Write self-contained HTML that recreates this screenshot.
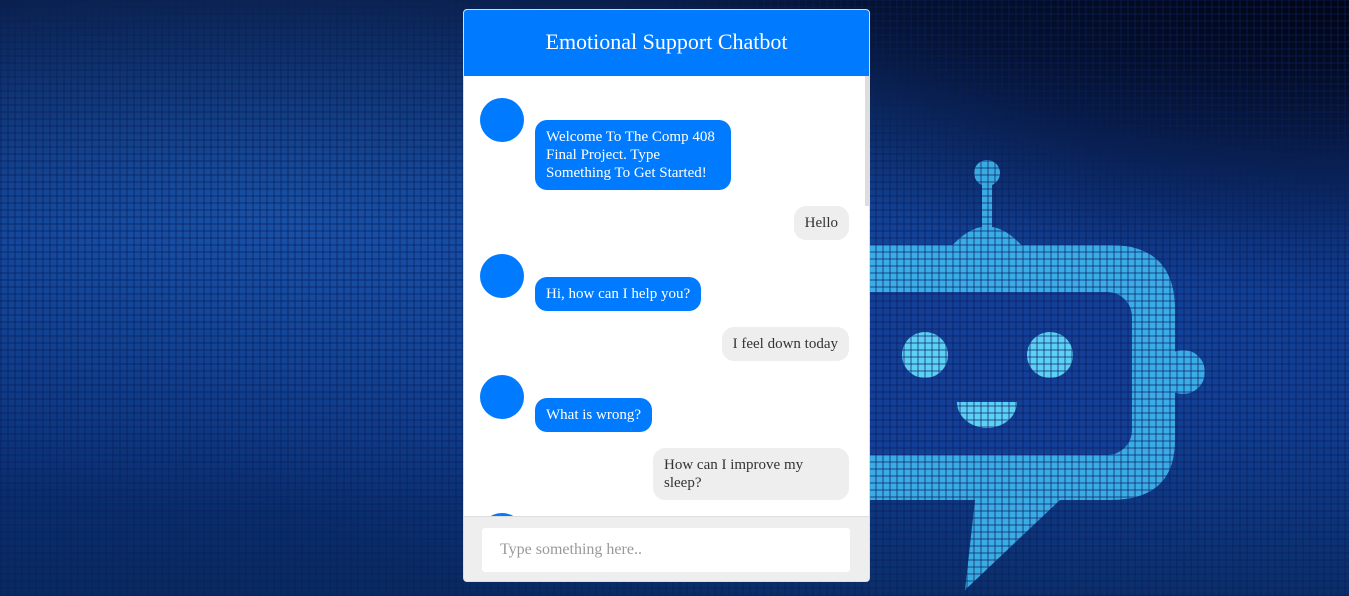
<!DOCTYPE html>
<html><head><style>
*{margin:0;padding:0;box-sizing:border-box}
body{width:1349px;height:596px;overflow:hidden;position:relative;font-family:"Liberation Serif",serif;
background:#0a2a6a;}
.bg{position:absolute;inset:0;background:
radial-gradient(ellipse at 100% 0%,rgba(0,0,10,.8),transparent 35%),
radial-gradient(ellipse at 20% 35%,rgba(40,120,220,.45),transparent 55%),
radial-gradient(ellipse at 80% 60%,rgba(30,90,200,.45),transparent 60%),
linear-gradient(180deg,#06163a 0%,#0b3380 40%,#0a3078 70%,#082a60 100%);}
.grid{position:absolute;inset:0;background:
repeating-linear-gradient(90deg,rgba(10,30,90,.35) 0 2px,transparent 2px 7px),
repeating-linear-gradient(0deg,rgba(10,30,90,.35) 0 2px,transparent 2px 7px);}
.chat{position:absolute;left:463px;top:9px;width:407px;height:573px;background:#fff;border-radius:4px;overflow:hidden;border:1px solid #ddd}
.hd{height:66px;background:#007bff;color:#fff;font-size:22px;text-align:center;line-height:64px}
.av{position:absolute;left:16px;width:44px;height:44px;border-radius:50%;background:#007bff}
.b{position:absolute;font-size:15px;line-height:18px;padding:8px 11px;border-radius:12px}
.bot{left:71px;background:#007bff;color:#fff}
.usr{right:20px;background:#eee;color:#333}
.ft{position:absolute;left:0;top:506px;width:100%;height:67px;background:#eee;border-top:1px solid #ddd}
.in{position:absolute;left:18px;top:11px;width:368px;height:44px;background:#fff;border-radius:3px;color:#999;font-size:16px;line-height:44px;padding-left:18px}
</style></head><body>
<div class="bg"></div>
<svg style="position:absolute;left:0;top:0" width="1349" height="596">
<g fill="#3fb8f0" opacity=".9">
<circle cx="987" cy="173" r="13"/>
<rect x="982" y="180" width="10" height="50"/>
<path d="M950 248 Q987 205 1024 248Z"/>
<path d="M840 245 H1110 Q1175 245 1175 310 V440 Q1175 500 1110 500 H1060 L965 590 L975 500 H840Z"/>
<circle cx="1183" cy="372" r="22"/>
</g>
<rect x="840" y="292" width="292" height="163" rx="25" fill="#143f98"/>
<g fill="#5cd0f5"><circle cx="925" cy="355" r="23"/><circle cx="1050" cy="355" r="23"/>
<path d="M957 402 H1017 A30 26 0 0 1 957 402Z"/></g>
</svg>
<div class="grid"></div>
<div class="chat">
<div class="hd">Emotional Support Chatbot</div>
<div class="av" style="top:88px"></div>
<div class="b bot" style="top:110px;width:196px">Welcome To The Comp 408 Final Project. Type Something To Get Started!</div>
<div class="b usr" style="top:196px">Hello</div>
<div class="av" style="top:244px"></div>
<div class="b bot" style="top:267px">Hi, how can I help you?</div>
<div class="b usr" style="top:317px">I feel down today</div>
<div class="av" style="top:365px"></div>
<div class="b bot" style="top:388px">What is wrong?</div>
<div class="b usr" style="top:438px;width:196px">How can I improve my sleep?</div>
<div class="av" style="top:503px"></div>
<div style="position:absolute;right:0;top:66px;width:4px;height:130px;background:#ddd"></div>
<div class="ft"><div class="in">Type something here..</div></div>
</div>
</body></html>
